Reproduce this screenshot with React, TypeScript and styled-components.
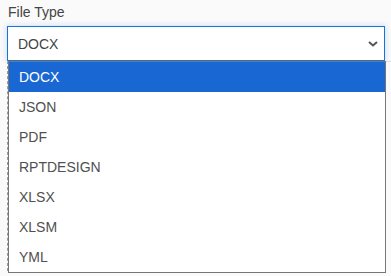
import React from "react";
import styled, { createGlobalStyle } from "styled-components";

const Global = createGlobalStyle`
  html, body { margin: 0; padding: 0; background: #fafafa; }
  body { font-family: "Liberation Sans", Arial, sans-serif; }
`;

const Page = styled.div`
  width: 391px;
  height: 276px;
  overflow: hidden;
  padding: 4px 6px 0 7px;
  box-sizing: border-box;
  display: flex;
  flex-direction: column;
`;

const Label = styled.div`
  font-size: 14px;
  line-height: 16px;
  color: #444;
  margin: 0 0 6px 1px;
`;

const Field = styled.div`
  position: relative;
  display: flex;
  flex-direction: column;
`;

const SelectBox = styled.div`
  height: 35px;
  box-sizing: border-box;
  border: 1px solid #1a73d9;
  background: #fff;
  box-shadow: 0 0 5px 1px rgba(30, 120, 220, 0.18);
  display: flex;
  align-items: center;
  justify-content: space-between;
  padding: 0 6px 0 10px;
  font-size: 14px;
  color: #444;
`;

const Card = styled.div`
  height: 210px;
  margin-right: -6px;
  border-left: 1px dashed #999;
  border-top: 1px solid #ddd;
  box-sizing: border-box;
`;

const List = styled.ul`
  position: absolute;
  left: 1px;
  right: -1px;
  top: 35px;
  margin: 0;
  padding: 0;
  list-style: none;
  background: #fff;
  border: 1px solid #767676;
  box-sizing: border-box;
`;

const Option = styled.li<{ $active?: boolean }>`
  height: 30px;
  display: flex;
  align-items: center;
  padding-left: 10px;
  font-size: 14px;
  color: ${(p) => (p.$active ? "#fff" : "#505050")};
  background: ${(p) => (p.$active ? "#1967d2" : "#fff")};
`;

const options = ["DOCX", "JSON", "PDF", "RPTDESIGN", "XLSX", "XLSM", "YML"];

export default function App() {
  return (
    <>
      <Global />
      <Page>
        <Label>File Type</Label>
        <Field>
          <SelectBox>
            <span>DOCX</span>
            <svg width="10" height="8" viewBox="0 0 10 8">
              <path d="M1 2 L5 5.5 L9 2" fill="none" stroke="#555" strokeWidth="2" />
            </svg>
          </SelectBox>
          <Card />
          <List>
            {options.map((o, i) => (
              <Option key={o} $active={i === 0}>
                {o}
              </Option>
            ))}
          </List>
        </Field>
      </Page>
    </>
  );
}
